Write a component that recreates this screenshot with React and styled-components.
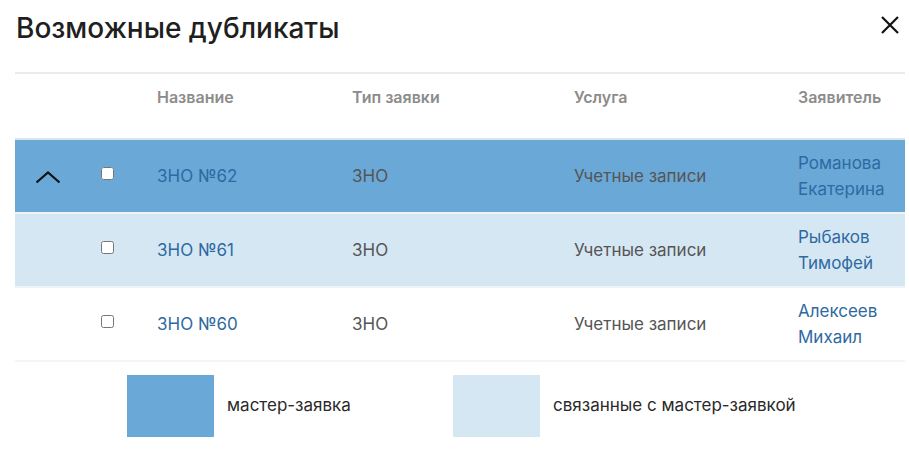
import React from "react";
import styled, { createGlobalStyle } from "styled-components";

const Global = createGlobalStyle`
  html, body { margin: 0; padding: 0; background: #fff; }
  body { font-family: Inter, "Noto Sans", sans-serif; color: #222; }
`;

const Dialog = styled.div`
  width: 909px;
  height: 460px;
  padding: 0 4px 0 15px;
  box-sizing: border-box;
`;

const Header = styled.div`
  display: flex;
  align-items: center;
  justify-content: space-between;
  height: 72px;
  padding-bottom: 16px;
  box-sizing: border-box;
`;

const Title = styled.h1`
  margin: 0;
  font-size: 28px;
  font-weight: 500;
  color: #1f1f1f;
  padding-left: 1px;
  letter-spacing: 0;
`;

const CloseButton = styled.button`
  border: 0;
  background: none;
  padding: 0;
  width: 22px;
  height: 22px;
  margin: 0 4px 6px 0;
  display: flex;
  align-items: center;
  justify-content: center;
  cursor: pointer;
`;

const Table = styled.div`
  border-top: 2px solid #ebebeb;
`;

const Row = styled.div`
  display: grid;
  grid-template-columns: 85px 57px 195px 222px 224px 1fr;
  align-items: center;
  height: ${(p) => p.$h}px;
  background: ${(p) => p.$bg || "#fff"};
  border-bottom: 2px solid ${(p) => p.$line || "#f2f4f6"};
`;

const HeadRow = styled(Row)`
  align-items: start;
  padding-top: 13px;
  box-sizing: border-box;
`;

const HeadCell = styled.div`
  font-size: 16px;
  font-weight: 600;
  color: #8c8c8c;
`;

const Cell = styled.div`
  font-size: 17px;
  color: ${(p) => (p.$link ? "#2e6aa1" : "#555")};
  line-height: 26px;
`;

const ChevronCell = styled.div`
  display: flex;
  justify-content: flex-start;
  padding-left: 20px;
  padding-top: 3px;
`;

const Check = styled.input.attrs({ type: "checkbox" })`
  margin: 0 0 8px 1px;
  width: 13px;
  height: 13px;
`;

const Legend = styled.div`
  display: grid;
  grid-template-columns: 326px auto;
  padding: 13px 0 0 112px;
`;

const LegendItem = styled.div`
  display: flex;
  align-items: center;
  gap: 13px;
`;

const Swatch = styled.div`
  width: 87px;
  height: 62px;
  background: ${(p) => p.$c};
`;

const LegendText = styled.span`
  font-size: 17px;
  color: #2a2a2a;
  padding-bottom: 2px;
`;

const MASTER = "#6aa8d8";
const LINKED = "#d6e7f4";

const rows = [
  { name: "ЗНО №62", person: ["Романова", "Екатерина"], bg: MASTER, chevron: true },
  { name: "ЗНО №61", person: ["Рыбаков", "Тимофей"], bg: LINKED },
  { name: "ЗНО №60", person: ["Алексеев", "Михаил"], bg: "#fff" },
];

export default function App() {
  return (
    <>
      <Global />
      <Dialog>
        <Header>
          <Title>Возможные дубликаты</Title>
          <CloseButton aria-label="close">
            <svg width="20" height="20" viewBox="0 0 20 20">
              <path d="M2 2 L18 18 M18 2 L2 18" stroke="#111" strokeWidth="2.2" fill="none" />
            </svg>
          </CloseButton>
        </Header>
        <Table>
          <HeadRow $h={66} $line="#dde3ea">
            <div />
            <div />
            <HeadCell>Название</HeadCell>
            <HeadCell>Тип заявки</HeadCell>
            <HeadCell>Услуга</HeadCell>
            <HeadCell>Заявитель</HeadCell>
          </HeadRow>
          {rows.map((r, i) => (
            <Row key={i} $h={72} $bg={r.bg} $line={i === 2 ? "#f4f5f6" : "#eef3f8"}>
              <ChevronCell>
                {r.chevron && (
                  <svg width="26" height="13" viewBox="0 0 26 13">
                    <path d="M1.5 11.5 L13 1.5 L24.5 11.5" stroke="#111" strokeWidth="2.2" fill="none" />
                  </svg>
                )}
              </ChevronCell>
              <div>
                <Check />
              </div>
              <Cell $link>{r.name}</Cell>
              <Cell>ЗНО</Cell>
              <Cell>Учетные записи</Cell>
              <Cell $link>
                {r.person[0]}
                <br />
                {r.person[1]}
              </Cell>
            </Row>
          ))}
        </Table>
        <Legend>
          <LegendItem>
            <Swatch $c={MASTER} />
            <LegendText>мастер-заявка</LegendText>
          </LegendItem>
          <LegendItem>
            <Swatch $c={LINKED} />
            <LegendText>связанные с мастер-заявкой</LegendText>
          </LegendItem>
        </Legend>
      </Dialog>
    </>
  );
}
